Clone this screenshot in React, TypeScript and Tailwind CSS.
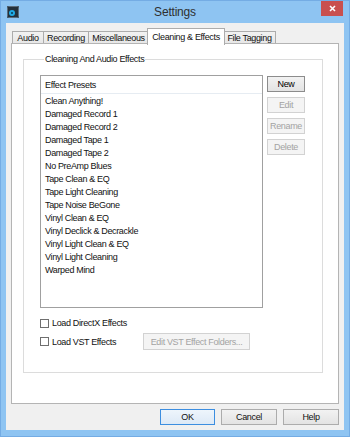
const presets = [
  'Clean Anything!',
  'Damaged Record 1',
  'Damaged Record 2',
  'Damaged Tape 1',
  'Damaged Tape 2',
  'No PreAmp Blues',
  'Tape Clean & EQ',
  'Tape Light Cleaning',
  'Tape Noise BeGone',
  'Vinyl Clean & EQ',
  'Vinyl Declick & Decrackle',
  'Vinyl Light Clean & EQ',
  'Vinyl Light Cleaning',
  'Warped Mind',
];

const tabs = [
  { label: 'Audio', w: 'w-[32px]' },
  { label: 'Recording', w: 'w-[46px]' },
  { label: 'Miscellaneous', w: 'w-[61px]' },
];

const SideButton = ({ label, disabled }: { label: string; disabled?: boolean }) => (
  <div
    className={
      disabled
        ? 'h-[16px] w-[38px] flex items-center justify-center border border-[#d2d2d2] bg-[#f4f4f4] text-[#a3a3a3]'
        : 'h-[16px] w-[38px] flex items-center justify-center border border-[#8c8c8c] bg-gradient-to-b from-[#f2f2f2] to-[#e3e3e3] text-black'
    }
  >
    {label}
  </div>
);

const CheckBox = () => <div className="w-[9px] h-[9px] border border-[#6f6f6f] bg-white shrink-0" />;

const App = () => {
  return (
    <div className="w-[350px] h-[437px] bg-[#8ec4f2] border border-[#74ace4] flex flex-col font-['Liberation_Sans',Arial,sans-serif] text-[9px] tracking-[-0.35px] leading-[12px] text-[#111] whitespace-nowrap">
      {/* title bar */}
      <div className="h-[22px] grid grid-cols-[1fr_auto_1fr] items-center">
        <div className="pl-[6px] flex items-center">
          <svg width="12" height="12" viewBox="0 0 12 12">
            <rect x="0" y="0" width="12" height="12" rx="1" fill="#23303c" />
            <rect x="0.5" y="0.5" width="11" height="11" rx="1" fill="none" stroke="#5c6d7c" />
            <circle cx="5" cy="7" r="3" fill="#20a9e4" />
            <circle cx="5" cy="7" r="1" fill="#0b3a52" />
          </svg>
        </div>
        <div className="text-[12px] tracking-[-0.2px] text-[#2f2f2f] leading-[14px]">Settings</div>
        <div className="flex justify-end self-start pr-[6px]">
          <div className="w-[22px] h-[15px] bg-[#c9504e] flex items-center justify-center">
            <svg width="7" height="7" viewBox="0 0 7 7">
              <path d="M1 1 L6 6 M6 1 L1 6" stroke="white" strokeWidth="1.6" />
            </svg>
          </div>
        </div>
      </div>

      {/* client area */}
      <div className="mx-[5px] h-[407px] bg-[#f0f0f0] px-[5px] pt-[5px] flex flex-col">
        {/* tabs */}
        <div className="h-[16px] flex items-end pl-[1px]">
          {tabs.map((t, i) => (
            <div
              key={t.label}
              className={`${t.w} ${i > 0 ? '-ml-px' : ''} h-[13px] border border-b-0 border-[#acacac] bg-gradient-to-b from-[#f2f2f2] to-[#e6e6e6] flex items-center justify-center`}
            >
              {t.label}
            </div>
          ))}
          <div className="relative z-10 -ml-[2px] w-[78px] h-[17px] -mb-px border border-b-0 border-[#acacac] bg-white flex items-start justify-center pt-[2px]">
            Cleaning &amp; Effects
          </div>
          <div className="-ml-[2px] w-[53px] h-[13px] border border-b-0 border-[#acacac] bg-gradient-to-b from-[#f2f2f2] to-[#e6e6e6] flex items-center justify-center">
            File Tagging
          </div>
        </div>

        {/* panel */}
        <div className="-mt-px h-[361px] border border-[#b4b4b4] bg-white">
          <fieldset className="ml-[11px] mt-[9px] w-[300px] border border-[#dcdcdc] pl-[16px] pt-[10px] pb-[22px]">
            <legend className="ml-[4px] px-[1px] leading-[12px]">Cleaning And Audio Effects</legend>

            <div className="flex items-start">
              <div className="w-[223px] h-[233px] border border-[#a0a0a0] bg-white">
                <div className="h-[18px] border-b border-[#e6ecf2] flex items-center pl-[4px]">Effect Presets</div>
                <div className="pt-[1px]">
                  {presets.map((p) => (
                    <div key={p} className="h-[13px] leading-[13px] pl-[4px]">
                      {p}
                    </div>
                  ))}
                </div>
              </div>
              <div className="ml-[4px] mt-[1px] flex flex-col gap-[5px]">
                <SideButton label="New" />
                <SideButton label="Edit" disabled />
                <SideButton label="Rename" disabled />
                <SideButton label="Delete" disabled />
              </div>
            </div>

            <div className="mt-[9px] h-[12px] flex items-center gap-[3px]">
              <CheckBox />
              <span>Load DirectX Effects</span>
            </div>
            <div className="mt-[4px] h-[17px] flex items-center">
              <div className="w-[103px] flex items-center gap-[3px]">
                <CheckBox />
                <span>Load VST Effects</span>
              </div>
              <div className="w-[107px] h-[17px] border border-[#d2d2d2] bg-[#f4f4f4] text-[#a3a3a3] flex items-center justify-center">
                Edit VST Effect Folders...
              </div>
            </div>
          </fieldset>
        </div>

        {/* bottom buttons */}
        <div className="mt-[5px] flex justify-end gap-[6px]">
          <div className="w-[55px] h-[16px] border border-[#3c8ee0] bg-gradient-to-b from-[#eef5fc] to-[#dde9f6] flex items-center justify-center">OK</div>
          <div className="w-[56px] h-[16px] border border-[#acacac] bg-gradient-to-b from-[#f2f2f2] to-[#e3e3e3] flex items-center justify-center">Cancel</div>
          <div className="w-[56px] h-[16px] border border-[#acacac] bg-gradient-to-b from-[#f2f2f2] to-[#e3e3e3] flex items-center justify-center">Help</div>
        </div>
      </div>
    </div>
  );
};

export default App;
